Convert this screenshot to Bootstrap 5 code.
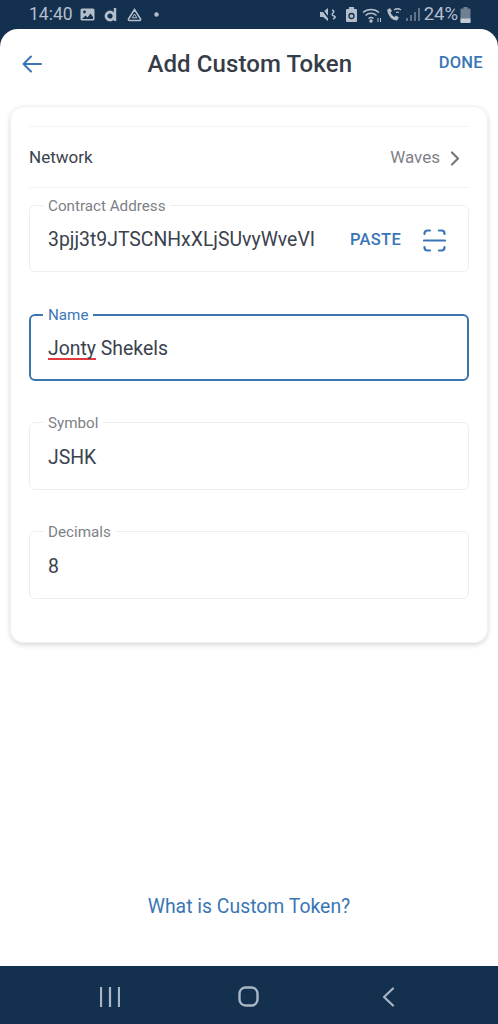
<!DOCTYPE html>
<html lang="en">
<head>
    <meta charset="UTF-8">
    <meta name="viewport" content="width=device-width, initial-scale=1.0">
    <title>Add Custom Token</title>
    <link rel="stylesheet" href="https://cdn.jsdelivr.net/npm/bootstrap@5.3.0/dist/css/bootstrap.min.css">
    <style>
        body { background: #14304f; font-family: Roboto, "Liberation Sans", sans-serif; color: #3a424e; }
        .phone { width: 498px; height: 1024px; display: flex; flex-direction: column; overflow: hidden; }
        .status-bar { height: 29px; flex: none; padding: 0 27px 0 29px; color: #b4bfcb; font-size: 17.500px; }
        .status-left { gap: 7px; }
        .status-right { gap: 4px; }
        .status-d { margin-left: 2px; }
        .status-tri { margin-left: 3px; }
        .status-dot { margin-left: 5px; }
        .sheet { flex: 1; background: #fff; border-radius: 18px 18px 0 0; display: flex; flex-direction: column; }
        .top-row { height: 69px; margin-bottom: 8px; flex: none; padding: 0 15px 0 22px; }
        .page-title { font-size: 24px; font-weight: 500; letter-spacing: .1px; line-height: 1; margin: 0; color: #363c48; flex: 1; text-align: center; padding-left: 19px; }
        .done-btn { font-size: 16.500px; font-weight: 500; color: #3a76b5; letter-spacing: .3px; }
        .token-card { margin: 0 10px; height: 537px; border: 1px solid #f0f1f3; border-radius: 14px; box-shadow: 0 2px 5px rgba(0,0,0,.16); padding: 19px 18px 0; }
        .network-row { height: 62px; padding: 2px 9px 0 0; border-top: 1px solid #f3f4f5; border-bottom: 1px solid #f3f4f5; font-size: 17px; }
        .network-value { color: #7d8187; gap: 10px; }
        .field { border: 1px solid #eceef0; border-radius: 6px; padding: 0 18px; height: 75px; margin: 0; min-width: 0; }
        .field legend { float: none; width: auto; font-size: 15.200px; line-height: 16px; margin: 0 0 0 -5px; padding: 1px 5px 0; color: #7d8187; }
        .field-value { font-size: 19.400px; line-height: 24px; margin-top: 15px; color: #3a424e; white-space: nowrap; }
        .field.active { border: 2px solid #3a76ad; padding: 0 17px; margin-top: 34px; }
        .field.active legend { color: #3a76b5; }
        .field.active .field-value { margin-top: 14px; }
        .field-gap { margin-top: 33px; height: 76px; }
        .field-first { margin-top: 9px; }
        .address-row { padding-right: 4px; margin-top: 14px; }
        .paste-btn { font-size: 16.500px; font-weight: 500; color: #3a76b5; letter-spacing: .3px; }
        .squiggle { text-decoration: underline solid #e0393e 2px; text-underline-offset: 3px; text-decoration-skip-ink: none; }
        .help-link { margin-top: auto; height: 74px; text-align: center; font-size: 19.400px; color: #3a76b5; text-decoration: none; }
        .nav-bottom { height: 58px; flex: none; background: #14304f; padding: 3px 103px 0 100px; }
        .nav-home { margin-right: 5px; }
    </style>
</head>
<body>
    <div class="phone">
        <div class="status-bar d-flex align-items-center justify-content-between">
            <div class="status-left d-flex align-items-center">
                <span>14:40</span>
                <svg width="15" height="13" viewBox="0 0 15 13"><rect x=".5" y=".5" width="14" height="12" rx="1.5" fill="#b4bfcb"/><circle cx="4.5" cy="4" r="1.4" fill="#14304f"/><path d="M2 11l3.5-3.5 2 2L10.500 5.500 13 9v2z" fill="#14304f"/></svg>
                <svg class="status-d" width="13" height="15" viewBox="0 0 13 15"><circle cx="6" cy="9" r="4" fill="none" stroke="#b4bfcb" stroke-width="2.800"/><path d="M11 1v13" stroke="#b4bfcb" stroke-width="2.400"/></svg>
                <svg class="status-tri" width="15" height="14" viewBox="0 0 15 14" fill="none" stroke="#b4bfcb"><path d="M7.500 1.500L13.500 11a1 1 0 0 1-1 1.500h-10a1 1 0 0 1-1-1.500z" stroke-width="1.500"/><path d="M7.500 6l2.300 3.800H5.200z"/></svg>
                <svg class="status-dot" width="5" height="5"><circle cx="2.500" cy="2.500" r="2.200" fill="#b4bfcb"/></svg>
            </div>
            <div class="status-right d-flex align-items-center">
                <svg width="17" height="15" viewBox="0 0 17 15" fill="#b4bfcb"><path d="M0 5h3l5-4v13L3 10H0z"/><path d="M1 1l10 13" stroke="#14304f" stroke-width="1.500"/><path d="M12 3q3 1 1 3t1 3-1 3" fill="none" stroke="#b4bfcb" stroke-width="1.500"/></svg>
                <svg class="ms-1" width="13" height="15" viewBox="0 0 13 15"><path d="M4 0h5v2h2a1 1 0 0 1 1 1v11a1 1 0 0 1-1 1H2a1 1 0 0 1-1-1V3a1 1 0 0 1 1-1h2z" fill="#b4bfcb"/><circle cx="6.500" cy="9" r="2.500" fill="none" stroke="#14304f" stroke-width="1.300"/></svg>
                <svg width="20" height="16" viewBox="0 0 20 16" fill="none" stroke="#b4bfcb" stroke-width="1.500"><path d="M1 5.500a12 12 0 0 1 16 0M3.500 8.500a8 8 0 0 1 11 0M6.500 11.500a4 4 0 0 1 5 0"/><circle cx="9" cy="14" r="1" fill="#b4bfcb"/><path d="M16 11v4M18.500 11v4" stroke-width="1"/></svg>
                <svg width="16" height="15" viewBox="0 0 16 15"><path d="M1 3l3-2 2 3-1.500 1.500q1 3 4 4.500l1.500-1.500 3 2-2 3Q3 13 1 3z" fill="#b4bfcb"/><path d="M8 3a6 6 0 0 1 7 0M10 5.500a3 3 0 0 1 3 0" fill="none" stroke="#b4bfcb" stroke-width="1.300"/></svg>
                <svg width="14" height="13" viewBox="0 0 14 13" fill="#5f7287"><rect x="0" y="10" width="2" height="3"/><rect x="4" y="7" width="2" height="6"/><rect x="8" y="4" width="2" height="9"/><rect x="12" y="0" width="2" height="13"/></svg>
                <div class="d-flex align-items-center" style="gap:2px">
                    <span style="font-size:18.500px">24%</span>
                    <svg width="11" height="16" viewBox="0 0 10 16"><path d="M3 0h4v1.500h2a1 1 0 0 1 1 1V15a1 1 0 0 1-1 1H1a1 1 0 0 1-1-1V2.500a1 1 0 0 1 1-1h2z" fill="#6f8093"/><path d="M0 11.500h10V15a1 1 0 0 1-1 1H1a1 1 0 0 1-1-1z" fill="#c3ccd6"/></svg>
                </div>
            </div>
        </div>

        <div class="sheet">
            <div class="top-row d-flex align-items-center">
                <svg width="20" height="18" viewBox="0 0 20 18" fill="none" stroke="#3a76b5" stroke-width="2" stroke-linecap="round" stroke-linejoin="round"><path d="M19 9H1.500M9 1.500L1.500 9 9 16.500"/></svg>
                <h1 class="page-title">Add Custom Token</h1>
                <span class="done-btn">DONE</span>
            </div>

            <div class="token-card">
                <div class="network-row d-flex align-items-center justify-content-between">
                    <span>Network</span>
                    <span class="network-value d-flex align-items-center">Waves
                        <svg width="10" height="15" viewBox="0 0 10 15" fill="none" stroke="#77797d" stroke-width="2.200" stroke-linecap="round" stroke-linejoin="round"><path d="M2 1.500L8 7.500 2 13.500"/></svg>
                    </span>
                </div>

                <fieldset class="field field-first">
                    <legend>Contract Address</legend>
                    <div class="field-value address-row d-flex align-items-center justify-content-between">
                        <span>3pjj3t9JTSCNHxXLjSUvyWveVI</span>
                        <span class="d-flex align-items-center" style="gap:22px">
                            <span class="paste-btn">PASTE</span>
                            <svg width="23" height="23" viewBox="0 0 23 23" fill="none" stroke="#3a76b5" stroke-width="2.200" stroke-linecap="round"><path d="M1.500 5V4.500a3 3 0 0 1 3-3H7M16 1.500h2.500a3 3 0 0 1 3 3V5M1.500 18v.5a3 3 0 0 0 3 3H7M16 21.500h2.500a3 3 0 0 0 3-3V18M1 11.500h21"/></svg>
                        </span>
                    </div>
                </fieldset>

                <fieldset class="field active">
                    <legend>Name</legend>
                    <div class="field-value"><span class="squiggle">Jonty</span> Shekels</div>
                </fieldset>

                <fieldset class="field field-gap">
                    <legend>Symbol</legend>
                    <div class="field-value">JSHK</div>
                </fieldset>

                <fieldset class="field field-gap">
                    <legend>Decimals</legend>
                    <div class="field-value">8</div>
                </fieldset>
            </div>

            <a class="help-link" href="#">What is Custom Token?</a>

            <div class="nav-bottom d-flex align-items-center justify-content-between">
                <svg width="20" height="20" viewBox="0 0 20 20" stroke="#a9b6c5" stroke-width="2.200"><path d="M1 0v20M10 0v20M19 0v20"/></svg>
                <svg class="nav-home" width="21" height="21" viewBox="0 0 21 21" fill="none" stroke="#a9b6c5" stroke-width="2.400"><rect x="1.500" y="1.500" width="18" height="18" rx="6"/></svg>
                <svg width="13" height="20" viewBox="0 0 13 20" fill="none" stroke="#a9b6c5" stroke-width="2.200" stroke-linecap="round" stroke-linejoin="round"><path d="M11 1.500L2 10l9 8.500"/></svg>
            </div>
        </div>
    </div>
    <script src="https://cdn.jsdelivr.net/npm/bootstrap@5.3.0/dist/js/bootstrap.bundle.min.js"></script>
</body>
</html>
